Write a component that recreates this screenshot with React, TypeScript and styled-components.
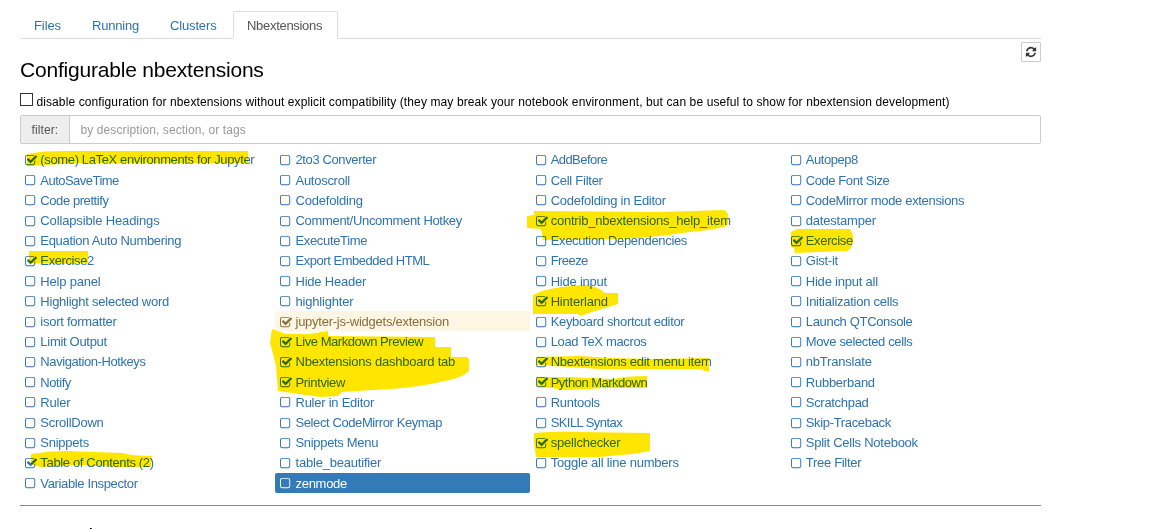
import React from "react";
import styled, { createGlobalStyle } from "styled-components";

const Global = createGlobalStyle`
  * { box-sizing: border-box; }
  html, body { margin: 0; background: #fff; overflow: hidden; }
  body { font: 13px/20px "Liberation Sans", Arial, sans-serif; color: #000; }
`;

const Page = styled.main`
  position: relative;
  width: 1158px;
  height: 529px;
  overflow: hidden;
  padding: 11px 117px 0 20px;
`;

const Tabs = styled.nav`
  display: flex;
  height: 28px;
  border-bottom: 1px solid #ddd;
`;

const Tab = styled.a<{ $active?: boolean; $w: number; $ls?: number }>`
  width: ${(p) => p.$w}px;
  height: 28px;
  padding: 4px 0 0 13px;
  border: 1px solid ${(p) => (p.$active ? "#ddd" : "transparent")};
  border-bottom-color: ${(p) => (p.$active ? "#fff" : "transparent")};
  border-radius: 2px 2px 0 0;
  color: ${(p) => (p.$active ? "#555" : "#2e73b0")};
  letter-spacing: ${(p) => p.$ls ?? 0}px;
  white-space: nowrap;
`;

const TitleRow = styled.header`
  display: flex;
  justify-content: space-between;
  height: 53px;
  padding-top: 3px;
`;

const Title = styled.h3`
  margin: 16px 0 0;
  font-size: 21px;
  line-height: 24px;
  font-weight: 400;
  letter-spacing: -0.2px;
`;

const RefreshButton = styled.button`
  display: flex;
  align-items: center;
  justify-content: center;
  width: 20px;
  height: 20px;
  padding: 0;
  border: 1px solid #ccc;
  border-radius: 1px;
  background: #fff;
  color: #333;
`;

const Compat = styled.label`
  display: flex;
  height: 23px;
  gap: 3.4px;
  font-size: 12px;
  line-height: 20px;
  letter-spacing: 0.112px;
  white-space: nowrap;
`;

const Box = styled.span`
  width: 13px;
  height: 13px;
  margin-top: 1px;
  border: 1px solid #333;
`;

const Filter = styled.div`
  display: flex;
  height: 29px;
  border: 1px solid #ccc;
  border-radius: 2px;
  overflow: hidden;
`;

const Addon = styled.span`
  width: 49px;
  padding: 4px 0 0 10.5px;
  border-right: 1px solid #ccc;
  background: #eee;
  color: #555;
  font-size: 12px;
  letter-spacing: 0.1px;
`;

const Field = styled.input`
  flex: 1;
  padding: 0 10.5px;
  border: 0;
  outline: 0;
  font: 12px "Liberation Sans", Arial, sans-serif;
  letter-spacing: 0.1px;
  &::placeholder { color: #999; opacity: 1; }
`;

const List = styled.div`
  display: grid;
  grid-template-columns: repeat(4, 255.15px);
  grid-auto-rows: 20.204px;
  margin-top: 5.6px;
`;

type Tone = "plain" | "warn" | "selected";
const ink = { plain: "#2e73b0", warn: "#8a6d3b", selected: "#fff" };
const fill = { plain: "transparent", warn: "#fdf6e3", selected: "#337ab7" };

const Item = styled.a<{ $tone: Tone; $tight: number }>`
  display: flex;
  align-items: center;
  gap: 3px;
  padding: 1.4px 0 0 5.3px;
  border-radius: 2px;
  color: ${(p) => ink[p.$tone]};
  background: ${(p) => fill[p.$tone]};
  letter-spacing: ${(p) => -0.2 - p.$tight}px;
  white-space: nowrap;
`;

const Rule = styled.hr`
  width: 1021px;
  margin: 12px 0 0;
  border: 0;
  border-top: 1px solid #888;
`;

const Marker = styled.svg`
  position: absolute;
  left: 0;
  top: 0;
  fill: #ffe600;
  mix-blend-mode: multiply;
  pointer-events: none;
`;

const Details = styled.h3`
  margin: 18px 0 0;
  font-size: 21px;
  line-height: 24px;
  font-weight: 400;
  letter-spacing: -0.3px;
`;

const SQUARE =
  "M1184 256h-832q-66 0-113 47t-47 113v832q0 66 47 113t113 47h832q66 0 113-47t47-113v-832q0-66-47-113t-113-47zm288 160v832q0 119-84.5 203.5t-203.5 84.5h-832q-119 0-203.5-84.5t-84.5-203.5v-832q0-119 84.5-203.5t203.5-84.5h832q119 0 203.5 84.5t84.5 203.5z";
const CHECKED =
  "M1472 930v318q0 119-84.5 203.5t-203.5 84.5h-832q-119 0-203.5-84.5t-84.5-203.5v-832q0-119 84.5-203.5t203.5-84.5h832q63 0 117 25 15 7 18 23 3 17-9 29l-49 49q-10 10-23 10-3 0-9-2-23-6-45-6h-832q-66 0-113 47t-47 113v832q0 66 47 113t113 47h832q66 0 113-47t47-113v-254q0-13 9-22l64-64q10-10 23-10 6 0 12 3 20 8 20 29zm231-489l-814 814q-24 24-57 24t-57-24l-430-430q-24-24-24-57t24-57l110-110q24-24 57-24t57 24l263 263 647-647q24-24 57-24t57 24l110 110q24 24 24 57t-24 57z";
const REFRESH =
  "M1639 1056q0 5-1 7-64 268-268 434.5t-478 166.5q-146 0-282.5-55t-243.5-157l-129 129q-19 19-45 19t-45-19-19-45v-448q0-26 19-45t45-19h448q26 0 45 19t19 45-19 45l-137 137q71 66 161 102t187 36q134 0 250-65t186-179q11-17 53-117 8-23 30-23h192q13 0 22.5 9.5t9.5 22.5zm25-800v448q0 26-19 45t-45 19h-448q-26 0-45-19t-19-45 19-45l138-138q-148-137-349-137-134 0-250 65t-186 179q-11 17-53 117-8 23-30 23h-199q-13 0-22.5-9.5t-9.5-22.5v-7q65-268 270-434.5t480-166.5q146 0 284 55.5t245 156.5l130-129q19-19 45-19t45 19 19 45z";

/* [label, tightening of the tracking in px, enabled] */
type Entry = [string, number, boolean?];
const extensions: Entry[] = [
  ["(some) LaTeX environments for Jupyter", 0.17, true], ["2to3 Converter", 0.18], ["AddBefore", 0.35], ["Autopep8", 0.25],
  ["AutoSaveTime", 0.33], ["Autoscroll", 0.07], ["Cell Filter", 0.06], ["Code Font Size", 0.23],
  ["Code prettify", 0.23], ["Codefolding", 0], ["Codefolding in Editor", 0.06], ["CodeMirror mode extensions", 0.13],
  ["Collapsible Headings", -0.05], ["Comment/Uncomment Hotkey", 0.12], ["contrib_nbextensions_help_item", 0.01, true], ["datestamper", 0],
  ["Equation Auto Numbering", 0.12], ["ExecuteTime", 0.15], ["Execution Dependencies", 0.14], ["Exercise", 0.15, true],
  ["Exercise2", 0.2, true], ["Export Embedded HTML", 0.26], ["Freeze", 0.35], ["Gist-it", 0.06],
  ["Help panel", 0], ["Hide Header", 0.02], ["Hide input", 0.02], ["Hide input all", 0.02],
  ["Highlight selected word", 0.05], ["highlighter", 0], ["Hinterland", 0.02, true], ["Initialization cells", 0.05],
  ["isort formatter", 0.07], ["jupyter-js-widgets/extension", 0.05, true], ["Keyboard shortcut editor", 0.13], ["Launch QTConsole", 0.13],
  ["Limit Output", 0.1], ["Live Markdown Preview", 0.26, true], ["Load TeX macros", 0.14], ["Move selected cells", 0.16],
  ["Navigation-Hotkeys", 0.22], ["Nbextensions dashboard tab", 0.03, true], ["Nbextensions edit menu item", 0.05, true], ["nbTranslate", 0],
  ["Notify", 0.25], ["Printview", 0.17, true], ["Python Markdown", 0.3, true], ["Rubberband", 0.05],
  ["Ruler", 0], ["Ruler in Editor", 0.05], ["Runtools", 0.07], ["Scratchpad", 0.1],
  ["ScrollDown", 0.05], ["Select CodeMirror Keymap", 0.2], ["SKILL Syntax", 0.37], ["Skip-Traceback", 0.14],
  ["Snippets", 0.06], ["Snippets Menu", 0.12], ["spellchecker", 0, true], ["Split Cells Notebook", 0.05],
  ["Table of Contents (2)", 0.15, true], ["table_beautifier", 0], ["Toggle all line numbers", 0.01], ["Tree Filter", 0.1],
  ["Variable Inspector", 0.16], ["zenmode", 0.08],
];

const strokes = [
  "M27 154L40 152Q52 151 70 151H248V163L160 163L80 163L27 166Z",
  "M29 251H88V263L60 264L29 263Z",
  "M31 454Q50 451 66 451L122 453Q133 456 152 456L151 467L120 467L80 465L40 467L31 464Z",
  "M272 329L286 334L310 334L328 331V336L435 337V347L451 347V357H466Q470 358 469 362V371Q463 377 450 380Q415 388 390 389L342 392L338 396L320 397L278 391L276 366L272 350L270 343Z",
  "M534 211L660 212L724 210Q730 212 728 225Q722 229 690 232Q650 238 620 239L543 240L541 229L527 228V216L534 215Z",
  "M533 295L542 291Q560 286 585 285Q598 286 605 293H618V304Q605 308 592 312L580 316L578 314L533 314Z",
  "M537 357L580 356L610 358L650 359L709 358V371H705L701 369L600 369L537 365Z",
  "M537 377L570 377L590 378L612 379Q628 376 647 376V388H608L565 390L537 386Z",
  "M534 433Q555 431 580 432L650 433V451Q636 454 620 455L600 457H536L534 443Z",
  "M791 232L797 229H850Q855 236 852 246Q850 252 843 251L795 253L794 248L791 247Z",
];

function StateIcon({ checked }: { checked: boolean }) {
  return (
    <svg width="12.07" height="13" viewBox="64 0 1664 1792" fill="currentColor">
      <path d={checked ? CHECKED : SQUARE} />
    </svg>
  );
}

export default function App() {
  return (
    <Page>
      <Global />
      <Tabs>
        <Tab $w={58} $ls={-0.1}>Files</Tab>
        <Tab $w={78} $ls={-0.2}>Running</Tab>
        <Tab $w={77} $ls={-0.15}>Clusters</Tab>
        <Tab $w={105} $active $ls={-0.3}>Nbextensions</Tab>
      </Tabs>
      <TitleRow>
        <Title>Configurable nbextensions</Title>
        <RefreshButton aria-label="Refresh">
          <svg width="12" height="12" viewBox="0 0 1792 1792" fill="currentColor"><path d={REFRESH} /></svg>
        </RefreshButton>
      </TitleRow>
      <Compat>
        <Box />
        disable configuration for nbextensions without explicit compatibility (they may break your notebook environment, but can be useful to show for nbextension development)
      </Compat>
      <Filter>
        <Addon>filter:</Addon>
        <Field placeholder="by description, section, or tags" />
      </Filter>
      <List>
        {extensions.map(([name, tight, checked = false]) => {
          const tone: Tone = name === "zenmode" ? "selected" : name.startsWith("jupyter-js") ? "warn" : "plain";
          return (
            <Item key={name} $tone={tone} $tight={tight}>
              <StateIcon checked={checked} />
              <span>{name}</span>
            </Item>
          );
        })}
      </List>
      <Rule />
      <Details>zenmode</Details>
      <Marker width="1158" height="529">
        {strokes.map((d) => <path key={d} d={d} />)}
      </Marker>
    </Page>
  );
}
